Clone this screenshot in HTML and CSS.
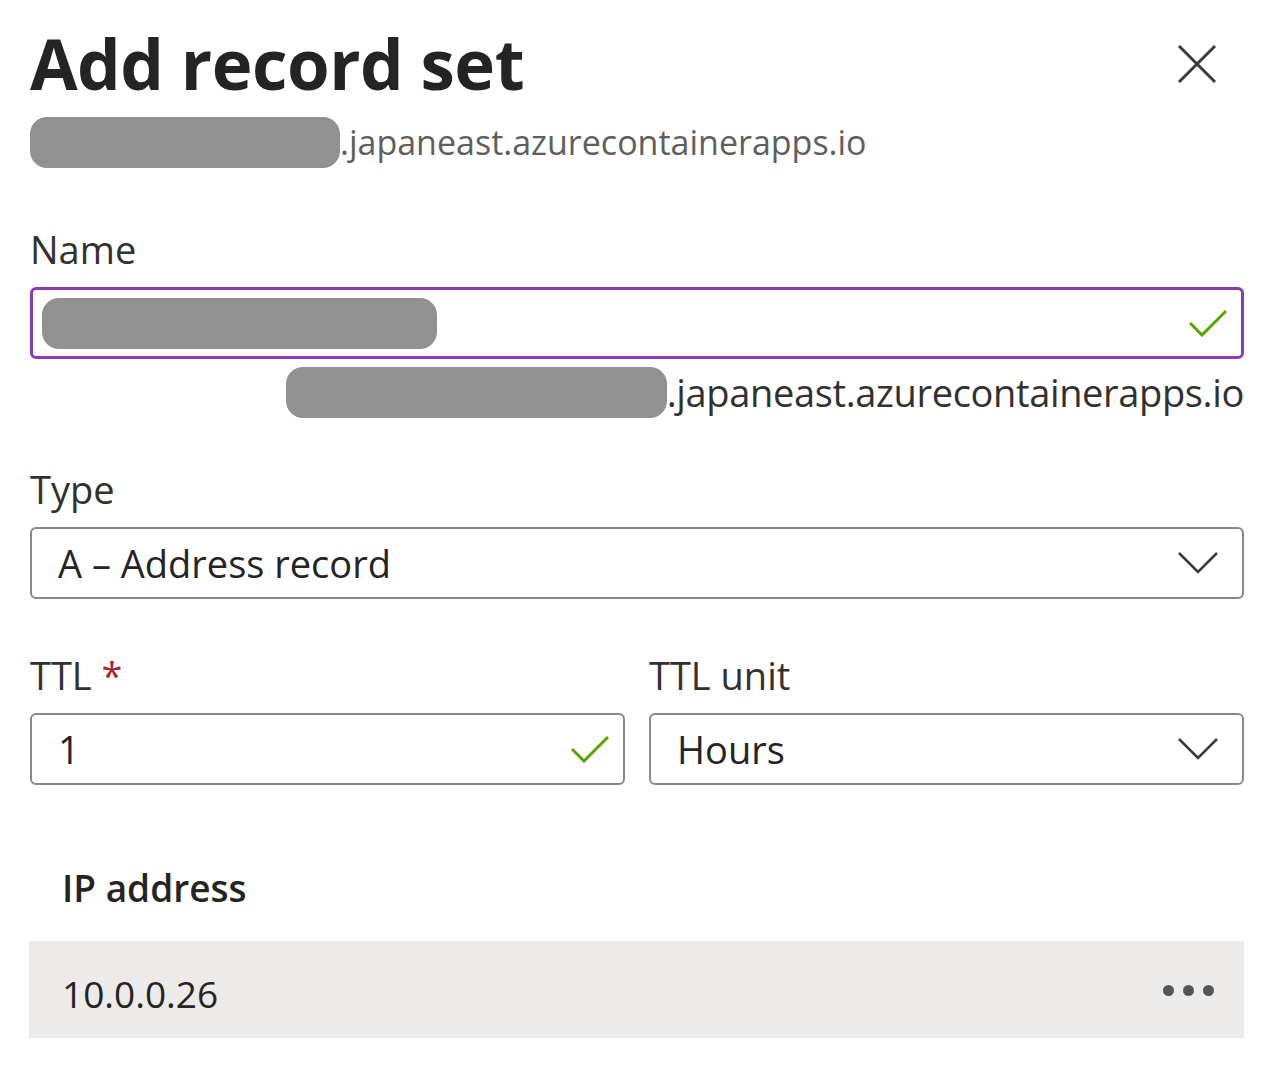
FILE: index.html
```html
<!DOCTYPE html>
<html>
<head>
<meta charset="utf-8">
<link rel="stylesheet" href="styles.css">
</head>
<body>
<div class="panel">
  <div class="header">
    <h1 class="title">Add record set</h1>
    <button class="close" aria-label="Close">
      <svg width="40" height="40" viewBox="0 0 40 40"><path d="M2 2 L38 38 M38 2 L2 38" stroke="#3b3a39" stroke-width="3" fill="none"/></svg>
    </button>
  </div>
  <div class="subtitle"><span class="blur blur-sub"></span><span class="zone">.japaneast.azurecontainerapps.io</span></div>

  <label class="label label-name">Name</label>
  <div class="field field-focus">
    <span class="blur blur-name"></span>
    <svg class="check" width="38" height="28" viewBox="0 0 38 28"><path d="M1 14 L13 26 L37 2" stroke="#57a300" stroke-width="3" fill="none"/></svg>
  </div>
  <div class="suffix"><span class="blur blur-suffix"></span><span class="zone zone-big">.japaneast.azurecontainerapps.io</span></div>

  <label class="label label-type">Type</label>
  <div class="field select">
    <span class="value">A – Address record</span>
    <svg class="chev" width="40" height="22" viewBox="0 0 40 22"><path d="M1 1 L20 20 L39 1" stroke="#3b3a39" stroke-width="2.5" fill="none"/></svg>
  </div>

  <div class="pair">
    <div class="col">
      <label class="label">TTL <span class="req">*</span></label>
      <div class="field">
        <span class="value">1</span>
        <svg class="check" width="38" height="28" viewBox="0 0 38 28"><path d="M1 14 L13 26 L37 2" stroke="#57a300" stroke-width="3" fill="none"/></svg>
      </div>
    </div>
    <div class="col">
      <label class="label">TTL unit</label>
      <div class="field select">
        <span class="value">Hours</span>
        <svg class="chev" width="40" height="22" viewBox="0 0 40 22"><path d="M1 1 L20 20 L39 1" stroke="#3b3a39" stroke-width="2.5" fill="none"/></svg>
      </div>
    </div>
  </div>

  <div class="grid-head">IP address</div>
  <div class="grid-row">
    <span class="ip">10.0.0.26</span>
    <span class="more"><i></i><i></i><i></i></span>
  </div>
</div>
</body>
</html>
```

FILE: styles.css
```css
* { box-sizing: border-box; }
html, body { margin: 0; padding: 0; background: #fff; }
body {
  font-family: "Open Sans", "Noto Sans", sans-serif;
  color: #323130;
}
.panel {
  width: 1276px;
  padding: 23px 32px 0 30px;
  display: flex;
  flex-direction: column;
}
.header {
  display: flex;
  justify-content: space-between;
  align-items: center;
  height: 80px;
}
.title {
  margin: 0;
  font-size: 69px;
  font-weight: 700;
  line-height: 80px;
  letter-spacing: -0.5px;
  color: #252423;
}
.close {
  border: 0;
  background: none;
  padding: 0;
  width: 40px;
  height: 40px;
  margin-right: 27px;
  margin-top: 2px;
}
.close svg { display: block; }
.subtitle {
  margin-top: 14px;
  height: 51px;
  display: flex;
  align-items: center;
}
.blur {
  display: inline-block;
  background: #919191;
  border-radius: 17px;
  height: 51px;
}
.blur-sub { width: 310px; }
.zone {
  font-size: 34px;
  color: #605e5c;
  line-height: 51px;
}
.label {
  display: block;
  font-size: 38px;
  line-height: 48px;
  color: #323130;
}
.label-name { margin-top: 57px; }
.field {
  margin-top: 14px;
  height: 72px;
  border: 2.5px solid #8a8886;
  border-radius: 6px;
  display: flex;
  align-items: center;
  justify-content: space-between;
  padding: 0 14px 0 26px;
}
.field-focus {
  border: 3px solid #8b3bb6;
  padding-left: 9px;
}
.blur-name { width: 395px; }
.check { display: block; margin-right: 0; }
.suffix {
  margin-top: 8px;
  height: 51px;
  display: flex;
  justify-content: flex-end;
  align-items: center;
}
.blur-suffix { width: 381px; }
.zone-big {
  font-size: 38px;
  color: #323130;
  letter-spacing: -0.35px;
}
.label-type { margin-top: 47px; }
.value {
  font-size: 38px;
  color: #252423;
}
.chev { display: block; margin-right: 10px; }
.pair {
  margin-top: 52px;
  display: grid;
  grid-template-columns: 1fr 1fr;
  column-gap: 24px;
}
.pair .field { margin-top: 14px; }
.req { color: #a4262c; }
.grid-head {
  margin-top: 79px;
  padding-left: 32px;
  font-size: 37px;
  font-weight: 600;
  line-height: 48px;
  color: #252423;
}
.grid-row {
  margin-top: 29px;
  margin-left: -1px;
  height: 97px;
  background: #edebe9;
  display: flex;
  align-items: center;
  justify-content: space-between;
  padding: 0 30px 0 33px;
}
.ip {
  font-size: 37px;
  color: #252423;
  padding-top: 8px;
}
.more {
  display: flex;
  gap: 9px;
  margin-top: 2px;
}
.more i {
  display: block;
  width: 11px;
  height: 11px;
  border-radius: 50%;
  background: #555;
}
```
